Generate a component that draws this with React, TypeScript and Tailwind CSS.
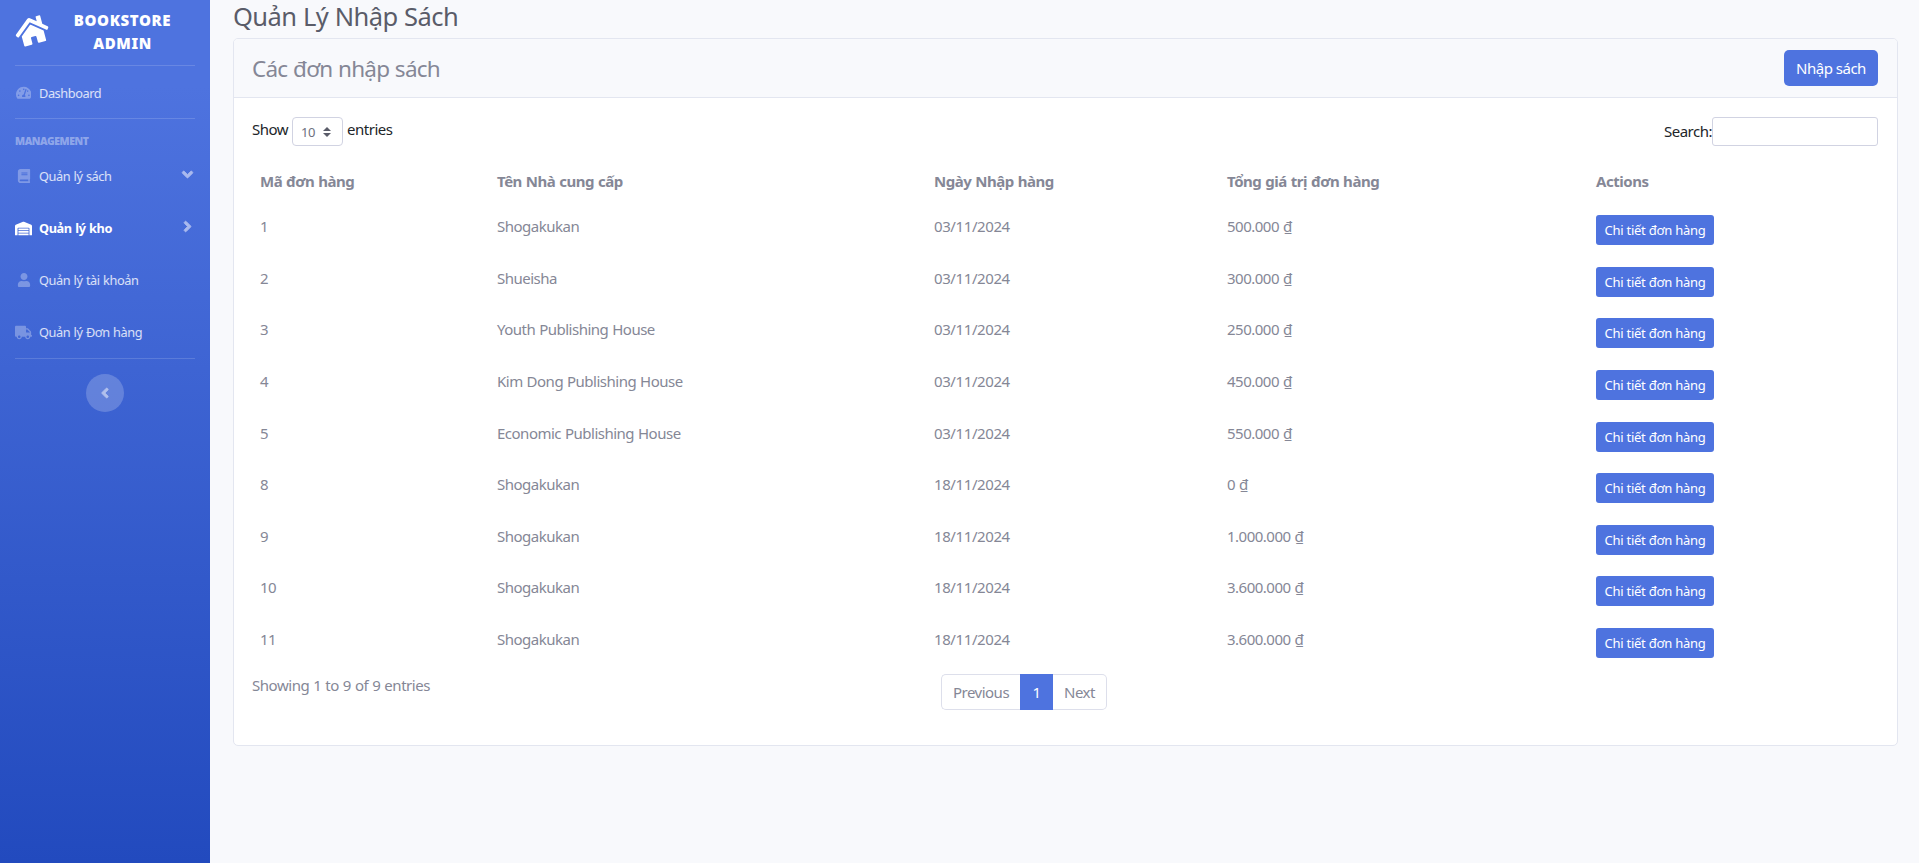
import React from "react";
import {
  FaHome,
  FaTachometerAlt,
  FaBook,
  FaWarehouse,
  FaUser,
  FaTruck,
  FaAngleDown,
  FaAngleRight,
  FaAngleLeft,
} from "react-icons/fa";

type Order = { id: number; supplier: string; date: string; total: string };

const orders: Order[] = [
  { id: 1, supplier: "Shogakukan", date: "03/11/2024", total: "500.000 ₫" },
  { id: 2, supplier: "Shueisha", date: "03/11/2024", total: "300.000 ₫" },
  { id: 3, supplier: "Youth Publishing House", date: "03/11/2024", total: "250.000 ₫" },
  { id: 4, supplier: "Kim Dong Publishing House", date: "03/11/2024", total: "450.000 ₫" },
  { id: 5, supplier: "Economic Publishing House", date: "03/11/2024", total: "550.000 ₫" },
  { id: 8, supplier: "Shogakukan", date: "18/11/2024", total: "0 ₫" },
  { id: 9, supplier: "Shogakukan", date: "18/11/2024", total: "1.000.000 ₫" },
  { id: 10, supplier: "Shogakukan", date: "18/11/2024", total: "3.600.000 ₫" },
  { id: 11, supplier: "Shogakukan", date: "18/11/2024", total: "3.600.000 ₫" },
];

function NavItem({
  icon,
  label,
  active,
  arrow,
}: {
  icon: React.ReactNode;
  label: string;
  active?: boolean;
  arrow?: React.ReactNode;
}) {
  return (
    <a
      className={
        "flex h-[52px] items-center whitespace-nowrap text-[12.75px] " +
        (active ? "font-bold tracking-[-0.38px] text-white" : "tracking-[-0.42px] text-white/80")
      }
    >
      <span className={"mr-[7px] flex w-[17px] shrink-0 justify-center " + (active ? "text-white" : "text-white/30")}>
        {icon}
      </span>
      <span>{label}</span>
      {arrow && <span className="-mr-px mb-1 ml-auto text-[#a9b9ee]">{arrow}</span>}
    </a>
  );
}

function Sidebar() {
  return (
    <aside className="flex w-[210px] shrink-0 flex-col bg-[linear-gradient(180deg,#4e73df_10%,#224abe_100%)] px-[15px]">
      <div className="flex h-[65px] items-center pb-[3px] text-white">
        <FaHome className="-rotate-[15deg]" size={34} />
        <div className="mr-[9px] ml-[10px] flex-1 pt-[2px] text-center text-[15px] leading-[23px] font-black tracking-[0.6px]">
          BOOKSTORE
          <br />
          ADMIN
        </div>
      </div>
      <hr className="border-white/15" />
      <div className="pt-px">
        <NavItem icon={<FaTachometerAlt size={15.5} />} label="Dashboard" />
      </div>
      <hr className="-mt-px border-white/15" />
      <div className="mt-[14px] mb-px text-[10.4px] leading-4 font-black tracking-[-0.4px] text-white/40">
        MANAGEMENT
      </div>
      <NavItem
        icon={<FaBook size={14} />}
        label="Quản lý sách"
        arrow={<FaAngleDown size={17} className="[stroke-width:24px]" />}
      />
      <NavItem
        active
        icon={<FaWarehouse size={17} />}
        label="Quản lý kho"
        arrow={<FaAngleRight size={17} className="[stroke-width:24px]" />}
      />
      <NavItem icon={<FaUser size={14} />} label="Quản lý tài khoản" />
      <NavItem icon={<FaTruck size={17} />} label="Quản lý Đơn hàng" />
      <hr className="border-white/15" />
      <button className="mx-auto mt-[15px] flex size-[38px] items-center justify-center rounded-full bg-white/20 text-[#b1c0ec]">
        <FaAngleLeft className="-ml-px [stroke-width:24px]" size={16} />
      </button>
    </aside>
  );
}

function OrdersTable() {
  return (
    <table className="w-full table-fixed border-collapse text-left">
      <colgroup>
        <col className="w-[237px]" />
        <col className="w-[437px]" />
        <col className="w-[293px]" />
        <col className="w-[369px]" />
        <col />
      </colgroup>
      <thead>
        <tr className="h-[49px]">
          {["Mã đơn hàng", "Tên Nhà cung cấp", "Ngày Nhập hàng", "Tổng giá trị đơn hàng", "Actions"].map((h) => (
            <th key={h} className="px-2 pt-0 pb-[3px] font-bold tracking-[-0.47px]">
              {h}
            </th>
          ))}
        </tr>
      </thead>
      <tbody>
        {orders.map((o) => (
          <tr key={o.id} className="h-[51.65px] align-top">
            <td className="px-2 pt-[7px]">{o.id}</td>
            <td className="px-2 pt-[7px]">{o.supplier}</td>
            <td className="px-2 pt-[7px] tracking-[-0.4px]">{o.date}</td>
            <td className="px-2 pt-[7px]">{o.total}</td>
            <td className="px-2 pt-2">
              <button className="block h-[30px] w-[118px] rounded-[3px] bg-[#4e73df] text-[13px] tracking-[-0.25px] whitespace-nowrap text-white">
                Chi tiết đơn hàng
              </button>
            </td>
          </tr>
        ))}
      </tbody>
    </table>
  );
}

export default function App() {
  return (
    <div className="flex h-[863px] w-full overflow-hidden bg-[#f8f9fc] font-['Noto_Sans',sans-serif] text-[15px] leading-6 tracking-[-0.5px] text-[#858796] [word-spacing:0.5px]">
      <Sidebar />
      <main className="min-w-0 flex-1 pr-[21px] pl-[23px]">
        <h1 className="h-[38px] text-[25.5px] leading-[32px] tracking-[-0.58px] text-[#5a5c69]">Quản Lý Nhập Sách</h1>
        <section className="h-[708px] rounded-[5px] border border-[#e3e6f0] bg-white">
          <header className="flex h-[59px] items-center justify-between rounded-t-[4px] border-b border-[#e3e6f0] bg-[#f8f9fc] pr-[19px] pl-[18px]">
            <h2 className="pt-px text-[22.5px] leading-8 tracking-[-0.75px]">Các đơn nhập sách</h2>
            <button className="h-9 w-[94px] rounded-[5px] bg-[#4e73df] whitespace-nowrap text-white">Nhập sách</button>
          </header>
          <div className="pt-[19px] pr-[19px] pl-[18px]">
            <div className="flex h-[29px] justify-between text-[#212529]">
              <label className="flex">
                <span>Show</span>
                <span className="mr-[4px] ml-1 flex h-[29px] w-[51px] items-center rounded-[4px] border border-[#d1d3e2] bg-white pl-[8px] text-[13px] text-[#6e707e]">
                  10
                  <svg className="ml-[8px]" width="8" height="10" viewBox="0 0 4 5" fill="#5a5c69">
                    <path d="M2 0L0 2h4zm0 5L0 3h4z" />
                  </svg>
                </span>
                <span>entries</span>
              </label>
              <label className="flex items-center">
                <span className="-mt-px">Search:</span>
                <input className="h-[29px] w-[166px] rounded-[3px] border border-[#d1d3e2] bg-white" />
              </label>
            </div>
            <div className="pt-[12px]">
              <OrdersTable />
            </div>
            <div className="mt-[2px] grid grid-cols-[689px_1fr]">
              <div className="-mt-px tracking-[-0.45px]">Showing 1 to 9 of 9 entries</div>
              <nav className="flex h-9 w-[166px] text-center leading-[34px]">
                <span className="w-[79px] rounded-l-[5px] border border-r-0 border-[#dddfeb]">Previous</span>
                <span className="w-[33px] border border-[#4e73df] bg-[#4e73df] text-white">1</span>
                <span className="w-[54px] rounded-r-[5px] border border-l-0 border-[#dddfeb]">Next</span>
              </nav>
            </div>
          </div>
        </section>
      </main>
    </div>
  );
}
